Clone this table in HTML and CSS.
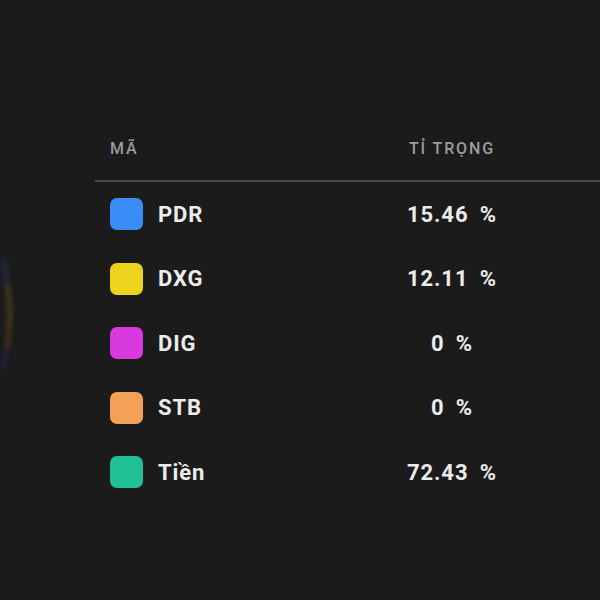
FILE: index.html
```html
<!DOCTYPE html>
<html lang="vi">
<head>
<meta charset="utf-8">
<title>Tỉ trọng danh mục</title>
<link rel="stylesheet" href="styles.css">
</head>
<body>
<div class="page">
  <div class="chart-side">
    <svg class="donut" width="95" height="600" viewBox="0 0 95 600">
      <defs>
        <filter id="soft" x="-50%" y="-10%" width="200%" height="120%">
          <feGaussianBlur stdDeviation="2"/>
        </filter>
      </defs>
      <g filter="url(#soft)" opacity="0.35">
        <path d="M3 258 A160 160 0 0 1 7 285" fill="none" stroke="#2a3a7a" stroke-width="6"/>
        <path d="M7 285 A160 160 0 0 1 9 330" fill="none" stroke="#7a6a10" stroke-width="6"/>
        <path d="M9 330 A160 160 0 0 1 7 348" fill="none" stroke="#8a4a1a" stroke-width="6"/>
        <path d="M7 348 A160 160 0 0 1 2 368" fill="none" stroke="#2a2a70" stroke-width="6"/>
      </g>
    </svg>
  </div>
  <div class="table">
    <div class="row head">
      <div class="cell name">MÃ</div>
      <div class="cell val">TỈ TRỌNG</div>
    </div>
    <div class="row">
      <div class="cell name"><span class="sw blue"></span><span class="tk">PDR</span></div>
      <div class="cell val">15.46 <span class="pct">%</span></div>
    </div>
    <div class="row">
      <div class="cell name"><span class="sw yellow"></span><span class="tk">DXG</span></div>
      <div class="cell val">12.11 <span class="pct">%</span></div>
    </div>
    <div class="row">
      <div class="cell name"><span class="sw magenta"></span><span class="tk">DIG</span></div>
      <div class="cell val">0 <span class="pct">%</span></div>
    </div>
    <div class="row">
      <div class="cell name"><span class="sw orange"></span><span class="tk">STB</span></div>
      <div class="cell val">0 <span class="pct">%</span></div>
    </div>
    <div class="row">
      <div class="cell name"><span class="sw teal"></span><span class="tk">Tiền</span></div>
      <div class="cell val">72.43 <span class="pct">%</span></div>
    </div>
  </div>
</div>
</body>
</html>
```
FILE: styles.css
```css
html, body {
  margin: 0;
  padding: 0;
  background: #1b1b1b;
}
body {
  width: 600px;
  height: 600px;
  overflow: hidden;
  font-family: Roboto, "Liberation Sans", Arial, sans-serif;
  color: #ececec;
}
.page {
  display: flex;
  height: 600px;
}
.chart-side {
  width: 95px;
  flex: none;
}
.donut {
  display: block;
}
.table {
  flex: 1;
  padding-top: 116px;
  display: flex;
  flex-direction: column;
}
.row {
  display: grid;
  grid-template-columns: 257px 200px 1fr;
  height: 64.5px;
  align-items: center;
}
.row.head {
  height: 64px;
  border-bottom: 2px solid #4a4a4a;
  color: #9c9c9c;
  font-size: 16px;
  font-weight: 500;
  letter-spacing: 1.9px;
}
.cell.name {
  padding-left: 15px;
  display: flex;
  align-items: center;
}
.cell.val {
  text-align: center;
}
.row:not(.head) {
  font-size: 22px;
  font-weight: 700;
  letter-spacing: 0.9px;
}
.sw {
  width: 33px;
  height: 32px;
  border-radius: 7px;
  margin-right: 15px;
  flex: none;
}
.pct {
  margin-left: 5px;
}
.blue { background: #3a8cf6; }
.yellow { background: #ecd41c; }
.magenta { background: #d83ae0; }
.orange { background: #f5a058; }
.teal { background: #1fc096; }
```
